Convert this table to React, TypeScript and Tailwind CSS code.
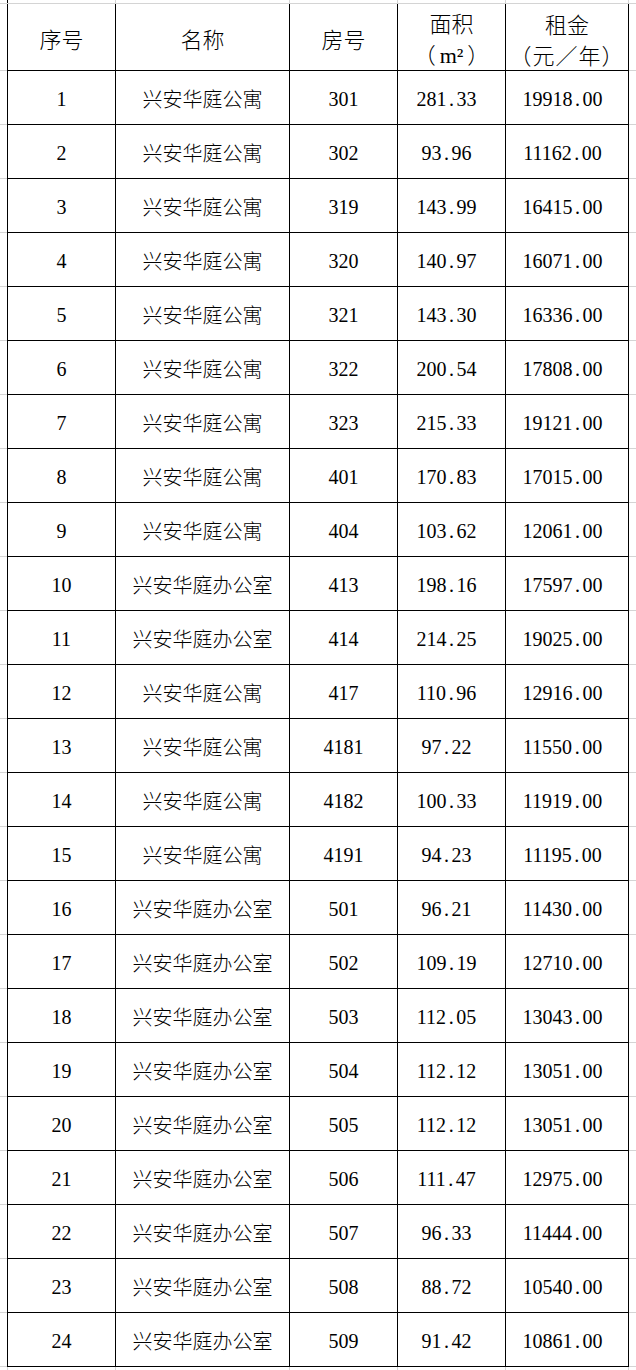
import React from 'react';

type Row = [number, string, string, string, string];

const APT = '兴安华庭公寓';
const OFF = '兴安华庭办公室';

const rows: Row[] = [
  [1, APT, '301', '281.33', '19918.00'],
  [2, APT, '302', '93.96', '11162.00'],
  [3, APT, '319', '143.99', '16415.00'],
  [4, APT, '320', '140.97', '16071.00'],
  [5, APT, '321', '143.30', '16336.00'],
  [6, APT, '322', '200.54', '17808.00'],
  [7, APT, '323', '215.33', '19121.00'],
  [8, APT, '401', '170.83', '17015.00'],
  [9, APT, '404', '103.62', '12061.00'],
  [10, OFF, '413', '198.16', '17597.00'],
  [11, OFF, '414', '214.25', '19025.00'],
  [12, APT, '417', '110.96', '12916.00'],
  [13, APT, '4181', '97.22', '11550.00'],
  [14, APT, '4182', '100.33', '11919.00'],
  [15, APT, '4191', '94.23', '11195.00'],
  [16, OFF, '501', '96.21', '11430.00'],
  [17, OFF, '502', '109.19', '12710.00'],
  [18, OFF, '503', '112.05', '13043.00'],
  [19, OFF, '504', '112.12', '13051.00'],
  [20, OFF, '505', '112.12', '13051.00'],
  [21, OFF, '506', '111.47', '12975.00'],
  [22, OFF, '507', '96.33', '11444.00'],
  [23, OFF, '508', '88.72', '10540.00'],
  [24, OFF, '509', '91.42', '10861.00'],
];

const cell = 'flex items-center justify-center border-r border-b border-black pt-[3px]';
const cjk = "font-['Noto_Sans_CJK_SC',sans-serif] font-light";

// the source font has a half-width period, so pad it out a bit
function Num({ value }: { value: string }) {
  const [int, dec] = value.split('.');
  return (
    <span>
      {int}
      <span className="px-[2.5px]">.</span>
      {dec}
    </span>
  );
}

// thin excel gridline strip (above / below the bordered table)
function GridStrip({ height, top }: { height: string; top?: boolean }) {
  return (
    <div className={`flex ${height} ${top ? 'border-b border-[#d4d4d4]' : ''}`}>
      <div className="w-[7px] shrink-0" />
      <div className={`w-[109px] shrink-0 border-l border-r ${top ? 'border-l-black' : 'border-l-[#d4d4d4]'} border-r-[#d4d4d4]`} />
      <div className="w-[174px] shrink-0 border-r border-[#d4d4d4]" />
      <div className="w-[108px] shrink-0 border-r border-[#d4d4d4]" />
      <div className="w-[108px] shrink-0 border-r border-[#d4d4d4]" />
      <div className="w-[123px] shrink-0 border-r border-[#d4d4d4]" />
      <div className="flex-1" />
    </div>
  );
}

export default function App() {
  return (
    <div className="w-[636px] h-[1370px] overflow-hidden bg-white text-black font-['Liberation_Serif','Noto_Sans_CJK_SC',serif]">
      <GridStrip height="h-[4px]" top />

      {/* header */}
      <div className={`flex h-[67px] text-[22px] leading-[31px] ${cjk}`}>
        <div className="w-[7px] shrink-0 border-b border-[#d4d4d4]" />
        <div className={`${cell} w-[109px] shrink-0 border-l`}>序号</div>
        <div className={`${cell} w-[174px] shrink-0`}>名称</div>
        <div className={`${cell} w-[108px] shrink-0`}>房号</div>
        <div className={`${cell} w-[108px] shrink-0 flex-col`}>
          <span>面积</span>
          <span>
            （<span className="px-[4px] font-['Liberation_Serif',serif] font-normal">m²</span>）
          </span>
        </div>
        <div className={`${cell} w-[123px] shrink-0 flex-col`}>
          <span>租金</span>
          <span className="tracking-[1px]">（元／年）</span>
        </div>
        <div className="flex-1 border-b border-[#d4d4d4]" />
      </div>

      {rows.map(([no, name, room, area, rent]) => (
        <div key={no} className="flex h-[54px] text-[20px]">
          <div className="w-[7px] shrink-0 border-b border-[#d4d4d4]" />
          <div className={`${cell} w-[109px] shrink-0 border-l`}>{no}</div>
          <div className={`${cell} w-[174px] shrink-0 ${cjk}`}>{name}</div>
          <div className={`${cell} w-[108px] shrink-0`}>{room}</div>
          <div className={`${cell} w-[108px] shrink-0 pr-[10px]`}>
            <Num value={area} />
          </div>
          <div className={`${cell} w-[123px] shrink-0 pr-[9px]`}>
            <Num value={rent} />
          </div>
          <div className="flex-1 border-b border-[#d4d4d4]" />
        </div>
      ))}

      <GridStrip height="h-[3px]" />
    </div>
  );
}
